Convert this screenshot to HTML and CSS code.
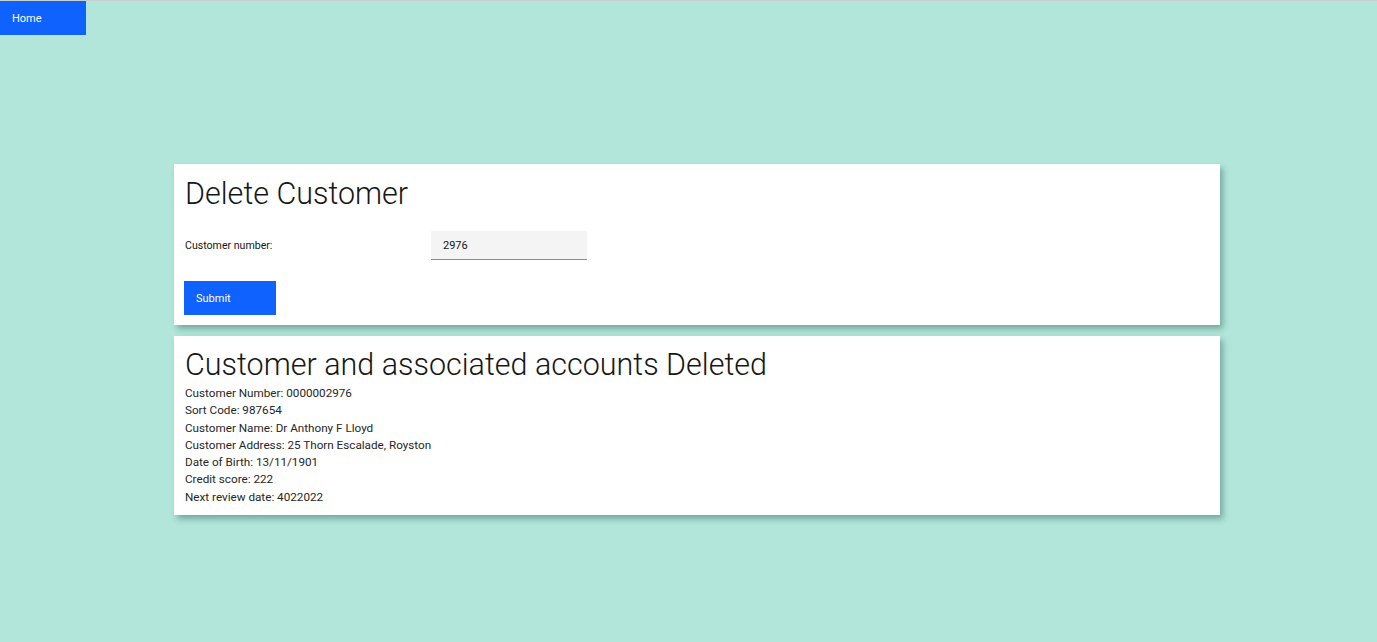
FILE: index.html
```html
<!DOCTYPE html>
<html lang="en">
<head>
<meta charset="utf-8">
<title>Delete Customer</title>
<link rel="stylesheet" href="styles.css">
</head>
<body>
<header class="topbar">
  <a class="home-btn" href="#">Home</a>
</header>
<main class="content">
  <section class="card form-card">
    <h1 class="card-title">Delete Customer</h1>
    <div class="form-row">
      <label class="form-label" for="custno">Customer number:</label>
      <input class="form-input" id="custno" type="text" value="2976">
    </div>
    <button class="submit-btn" type="button">Submit</button>
  </section>
  <section class="card result-card">
    <h2 class="card-title">Customer and associated accounts Deleted</h2>
    <ul class="details">
      <li>Customer Number: 0000002976</li>
      <li>Sort Code: 987654</li>
      <li>Customer Name: Dr Anthony F Lloyd</li>
      <li>Customer Address: 25 Thorn Escalade, Royston</li>
      <li>Date of Birth: 13/11/1901</li>
      <li>Credit score: 222</li>
      <li>Next review date: 4022022</li>
    </ul>
  </section>
</main>
</body>
</html>
```
FILE: styles.css
```css
html, body {
  margin: 0;
  padding: 0;
}
body {
  background: #b2e6da;
  border-top: 1px solid #c6d0ce;
  font-family: Roboto, "Open Sans", "Liberation Sans", sans-serif;
  color: #161616;
  min-height: 641px;
}
.topbar {
  display: flex;
}
.home-btn {
  display: flex;
  align-items: center;
  width: 74px;
  height: 34px;
  padding-left: 12px;
  background: #0f62fe;
  color: #ffffff;
  font-size: 11px;
  text-decoration: none;
}
.content {
  display: flex;
  flex-direction: column;
  gap: 11px;
  padding-top: 129px;
  padding-left: 174px;
}
.card {
  width: 1046px;
  box-sizing: border-box;
  background: #ffffff;
  padding: 0 10px;
  box-shadow: 3px 4px 6px rgba(0, 60, 50, 0.35);
}
.card-title {
  margin: 0 0 0 1px;
  font-weight: 300;
  font-size: 30.5px;
  line-height: 40px;
  color: #161616;
}
.form-card {
  padding-top: 10px;
  padding-bottom: 10px;
}
.form-row {
  display: flex;
  align-items: center;
  margin-top: 17px;
  padding-left: 1px;
}
.form-label {
  width: 246px;
  font-size: 10.6px;
}
.form-input {
  width: 156px;
  height: 29px;
  box-sizing: border-box;
  border: none;
  border-bottom: 1px solid #8d8d8d;
  background: #f4f4f4;
  padding: 0 12px;
  font-family: inherit;
  font-size: 11px;
  color: #161616;
}
.submit-btn {
  display: block;
  margin-top: 21px;
  width: 92px;
  height: 34px;
  border: none;
  background: #0f62fe;
  color: #ffffff;
  font-family: inherit;
  font-size: 11px;
  text-align: left;
  padding: 0 12px;
}
.result-card {
  padding-top: 9px;
  padding-bottom: 9px;
}
.details {
  list-style: none;
  margin: 0;
  padding: 0 0 0 1px;
  font-size: 11.7px;
  line-height: 17.3px;
  color: #262626;
}
```
